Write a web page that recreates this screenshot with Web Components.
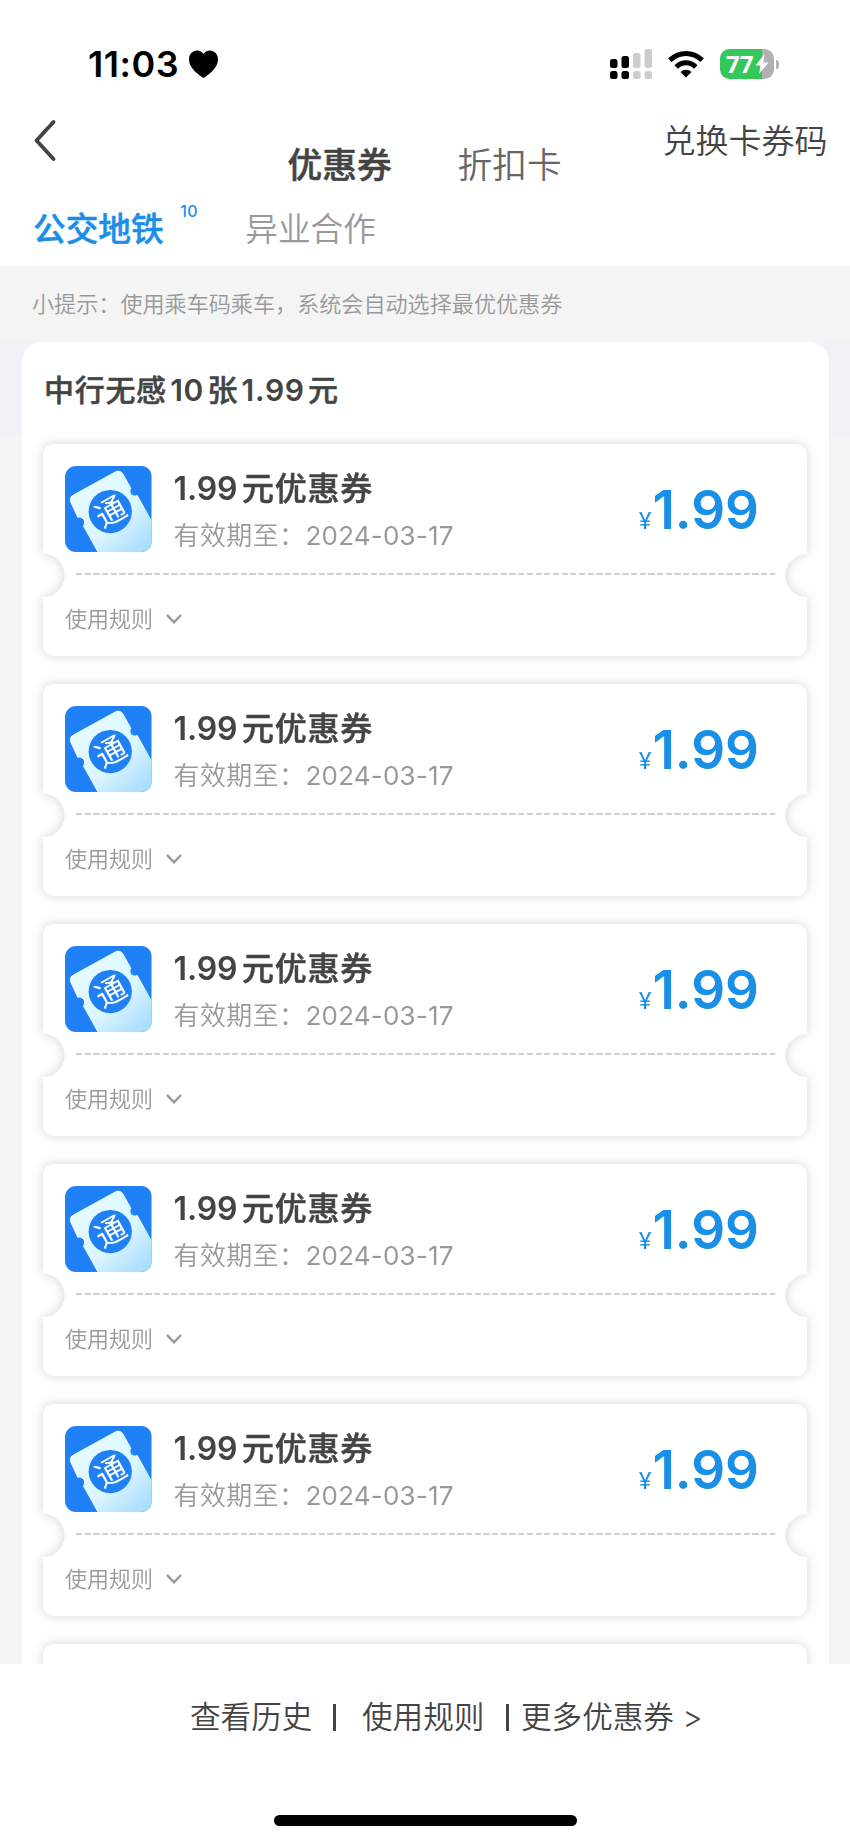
<!DOCTYPE html>
<html lang="zh-CN">
<head>
<meta charset="UTF-8">
<meta name="viewport" content="width=device-width, initial-scale=1">
<title>优惠券</title>
<style>
  body {
    margin: 0;
    background: #fff;
    color: #444;
    font-family: Inter, "Noto Sans CJK SC", sans-serif;
    font-weight: 350;
  }
</style>
</head>
<body>
<coupon-page></coupon-page>

<script>
class StatusBar extends HTMLElement {
  constructor() {
    super();
    this.attachShadow({ mode: 'open' }).innerHTML = `
      <style>
        :host {
          display: flex;
          align-items: center;
          height: 104px;
          padding: 24px 71px 0 88px;
          box-sizing: border-box;
          color: #000;
        }
        .time { font-size: 36px; font-weight: 600; line-height: 40px; letter-spacing: 0.5px; width: 101px; }
        .signal { margin-left: auto; }
        .wifi { margin-left: 16px; }
        .battery {
          display: flex;
          align-items: center;
          margin-left: 16px;
        }
        .level {
          display: flex;
          align-items: center;
          box-sizing: border-box;
          width: 54px;
          height: 30px;
          padding-left: 6px;
          border-radius: 9.5px;
          background: linear-gradient(90deg, #34c759 42px, #b1b1b1 42px);
          color: #fff;
          font: 700 24px/30px "Open Sans", sans-serif;
        }
        .cap { width: 3px; height: 9px; margin-left: 2px; border-radius: 0 5px 5px 0; background: #b1b1b1; }
        svg { display: block; flex: none; }
      </style>
      <div class="time">11:03</div>
      <svg width="29" height="28" viewBox="0 0 29 28"><path d="M14.5 28C11 25.5 0 19 0 9.5C0 4 3.6.4 8.2.4c2.7 0 5 1.3 6.3 3.600C15.800 1.700 18.100.4 20.800.4C25.400.4 29 4 29 9.500C29 19 18 25.500 14.500 28z"/></svg>
      <svg class="signal" width="42" height="30" viewBox="0 0 42 30">
        <g fill="#000"><rect y="10" width="7.5" height="9" rx="2.5"/><rect x="11.5" y="7" width="7.5" height="12" rx="2.5"/><rect y="22" width="7.5" height="8" rx="2.5"/><rect x="11.5" y="22" width="7.5" height="8" rx="2.5"/></g>
        <g fill="#ccc"><rect x="23" y="4" width="7.5" height="15" rx="2.5"/><rect x="34.5" y="0" width="7.5" height="19" rx="2.5"/><rect x="23" y="22" width="7.5" height="8" rx="2.5"/><rect x="34.5" y="22" width="7.5" height="8" rx="2.5"/></g>
      </svg>
      <svg class="wifi" width="36" height="30" viewBox="0 0 36 30">
        <g fill="none" stroke="#000" stroke-width="5"><path d="M1.8 11.2Q9 4.5 18 4.5T34.2 11.2"/><path d="M8.2 18Q12.5 13.8 18 13.8T27.8 18"/></g>
        <path d="M18 28.5l-5.500-5.500q2.300-2.200 5.500-2.200t5.500 2.200z"/>
      </svg>
      <div class="battery">
        <div class="level">77<svg width="14" height="20" viewBox="0 0 13 20" style="margin-left:2px"><path fill="#fff" d="M9 0L0 11.500h5L3.600 20L13 8.500H7.800z"/></svg></div>
        <div class="cap"></div>
      </div>
    `;
  }
}
customElements.define('status-bar', StatusBar);

class NavHeader extends HTMLElement {
  constructor() {
    super();
    this.attachShadow({ mode: 'open' }).innerHTML = `
      <style>
        :host {
          display: grid;
          grid-template-columns: 287.5px 170px 205px 1fr;
          height: 88px;
          white-space: nowrap;
          color: #444;
        }
        .back { margin: 15px 0 0 33px; }
        .tab { font-size: 34.7px; line-height: 50px; margin-top: 36px; color: #666; }
        .on { font-weight: 500; -webkit-text-stroke: 0.5px; color: #444; }
        .action { font-size: 33px; line-height: 50px; margin-top: 12px; }
      </style>
      <svg class="back" width="24" height="43" viewBox="0 0 24 43"><path d="M20.5 3L3.5 21.5L20.5 40" fill="none" stroke="#444" stroke-width="3.9" stroke-linecap="round" stroke-linejoin="round"/></svg>
      <div class="tab on">优惠券</div>
      <div class="tab">折扣卡</div>
      <div class="action">兑换卡券码</div>
    `;
  }
}
customElements.define('nav-header', NavHeader);

class CategoryTabs extends HTMLElement {
  constructor() {
    super();
    this.attachShadow({ mode: 'open' }).innerHTML = `
      <style>
        :host {
          display: flex;
          align-items: flex-start;
          height: 74px;
          padding-left: 33px;
          font-size: 32.7px;
          line-height: 50px;
          color: #999;
          white-space: nowrap;
        }
        .on { color: #1a8fe8; font-weight: 500; -webkit-text-stroke: 0.5px; margin-top: 12px; }
        .count { width: 65px; margin: 11px 0 0 16.5px; font-size: 16px; line-height: 16px; font-weight: 500; letter-spacing: 0.3px; color: #1a8fe8; }
        .off { margin-top: 12px; }
      </style>
      <div class="on">公交地铁</div>
      <div class="count">10</div>
      <div class="off">异业合作</div>
    `;
  }
}
customElements.define('category-tabs', CategoryTabs);

class CouponIcon extends HTMLElement {
  constructor() {
    super();
    this.attachShadow({ mode: 'open' }).innerHTML = `
      <style>
        :host { display: block; width: 86.5px; height: 86.5px; border-radius: 11px; overflow: hidden; }
        svg { display: block; width: 100%; height: 100%; }
      </style>
      <svg viewBox="0 0 86 86">
        <defs>
          <linearGradient id="paper" x1="0.2" y1="0.2" x2="0.9" y2="1">
            <stop offset="0" stop-color="#e4fbff"/>
            <stop offset="0.5" stop-color="#dcf7ff"/>
            <stop offset="1" stop-color="#a6dbff"/>
          </linearGradient>
        </defs>
        <rect width="86" height="86" fill="#2080f5"/>
        <path fill="url(#paper)" d="M8 28.500L50 5.500Q55 3 58 8L66 22Q64 25 66 28Q69 30.500 72 28.500L86 54V86H32.500L18 60Q20 56 18 53Q15.500 50.500 12.500 51.500L5.500 36.500Q3.500 31 8 28.500z"/>
        <circle cx="45" cy="45.3" r="21.5" fill="#2080f5"/>
        <text x="45.3" y="56.500" text-anchor="middle" transform="rotate(-29 45 45.3)" font-size="30" font-weight="400" fill="#fff">通</text>
      </svg>
    `;
  }
}
customElements.define('coupon-icon', CouponIcon);

class CouponCard extends HTMLElement {
  constructor() {
    super();
    this.attachShadow({ mode: 'open' }).innerHTML = `
      <style>
        :host {
          display: block;
          flex: none;
          height: 212px;
          filter: drop-shadow(0 0 6px rgba(50, 50, 70, 0.2));
          white-space: nowrap;
        }
        /* each half has its own notch cut out of the background */
        .ticket {
          display: flex;
          flex-direction: column;
          height: 100%;
          box-sizing: border-box;
          padding: 22px 32px 0 22px;
          border-radius: 11px;
          background:
            radial-gradient(circle at 0 131.5px, transparent 21.2px, #fff 22px) left / 50% 100% no-repeat,
            radial-gradient(circle at 100% 131.5px, transparent 21.2px, #fff 22px) right / 50% 100% no-repeat;
        }
        .main { display: flex; height: 86px; }
        .info { margin-left: 22px; }
        .name { font-size: 32px; line-height: 46px; font-weight: 500; -webkit-text-stroke: 0.5px; letter-spacing: 0.8px; color: #444; }
        .date { font-size: 26px; line-height: 40px; margin-top: 4px; letter-spacing: 0.4px; color: #999; }
        .day { font-weight: 400; letter-spacing: 0.2px; }
        .price { display: flex; align-items: baseline; gap: 1px; margin: 12px 16px 0 auto; color: #1a8fe8; line-height: 64px; }
        .yen { font-size: 23px; font-weight: 400; }
        .sum { font-size: 53px; font-weight: 600; }
        .line {
          height: 2px;
          margin: 21px 0 0 11px;
          background: repeating-linear-gradient(90deg, #d0d0d0 0 6.3px, transparent 6.3px 8.67px);
        }
        .rules { display: flex; align-items: center; gap: 12.5px; margin-top: 28px; font-size: 22px; line-height: 32px; color: #999; }
      </style>
      <div class="ticket">
        <div class="main">
          <coupon-icon></coupon-icon>
          <div class="info">
            <div class="name"><slot></slot></div>
            <div class="date">有效期至：<span class="day"><slot name="date"></slot></span></div>
          </div>
          <div class="price"><span class="yen">¥</span><span class="sum"><slot name="price"></slot></span></div>
        </div>
        <div class="line"></div>
        <div class="rules">使用规则
          <svg width="16" height="10" viewBox="0 0 16 10"><path d="M1 1L8 8.3L15 1" fill="none" stroke="#999" stroke-width="2.4"/></svg>
        </div>
      </div>
    `;
  }
}
customElements.define('coupon-card', CouponCard);

class CouponGroup extends HTMLElement {
  constructor() {
    super();
    this.attachShadow({ mode: 'open' }).innerHTML = `
      <style>
        :host {
          display: block;
          box-sizing: border-box;
          height: 1322px;
          padding: 0 21.5px;
          overflow: hidden;
          background: linear-gradient(#f2f1f8 95px, #f4f4f4 95px);
        }
        .panel {
          box-sizing: border-box;
          height: 1340px;
          padding: 23px 21.5px 0;
          border-radius: 20px 20px 0 0;
          background: #fff;
        }
        .title { font-size: 30px; line-height: 50px; font-weight: 500; -webkit-text-stroke: 0.5px; letter-spacing: 0.7px; padding-left: 1px; }
        .list { display: flex; flex-direction: column; gap: 28px; margin-top: 28.5px; }
        .next { height: 40px; border-radius: 11px; background: #fff; box-shadow: 0 0 12px rgba(50, 50, 70, 0.2); }
      </style>
      <div class="panel">
        <div class="title"><slot name="title"></slot></div>
        <div class="list"><slot></slot><div class="next"></div></div>
      </div>
    `;
  }
}
customElements.define('coupon-group', CouponGroup);

class PageFooter extends HTMLElement {
  constructor() {
    super();
    this.attachShadow({ mode: 'open' }).innerHTML = `
      <style>
        :host { display: flex; flex-direction: column; align-items: center; height: 179px; background: #fff; }
        .links {
          display: flex;
          align-items: center;
          align-self: flex-start;
          margin: 31px 0 0 190px;
          font-size: 30.6px;
          line-height: 44px;
          white-space: nowrap;
        }
        .bar { width: 3px; height: 27px; background: #444; }
        .first { width: 143px; }
        .second { width: 144px; margin-left: 26px; }
        .third { margin-left: 12px; }
        .home { width: 303px; height: 11px; margin-top: 76px; border-radius: 6px; background: #000; }
      </style>
      <div class="links">
        <span class="first">查看历史</span>
        <i class="bar"></i>
        <span class="second">使用规则</span>
        <i class="bar"></i>
        <span class="third">更多优惠券 &gt;</span>
      </div>
      <div class="home"></div>
    `;
  }
}
customElements.define('page-footer', PageFooter);

class CouponPage extends HTMLElement {
  constructor() {
    super();
    const cards = Array.from({ length: 5 }, () => `
      <coupon-card><span class="amount">1.99</span>元优惠券<span slot="date">2024-03-17</span><span slot="price">1.99</span></coupon-card>
    `).join('');
    this.attachShadow({ mode: 'open' }).innerHTML = `
      <style>
        :host { display: block; width: 850px; height: 1843px; overflow: hidden; }
        .tip {
          height: 76px;
          padding-left: 32px;
          background: #f4f4f4;
          color: #999;
          font-size: 22.1px;
          line-height: 76px;
        }
        .amount, .num { font-weight: 600; -webkit-text-stroke: 0; }
        .amount { letter-spacing: -0.1px; margin-right: 4.5px; }
        .num { margin: 0 3.4px; }
      </style>
      <status-bar></status-bar>
      <nav-header></nav-header>
      <category-tabs></category-tabs>
      <div class="tip">小提示：使用乘车码乘车，系统会自动选择最优优惠券</div>
      <coupon-group>
        <span slot="title">中行无感<span class="num">10</span>张<span class="num">1.99</span>元</span>
        ${cards}
      </coupon-group>
      <page-footer></page-footer>
    `;
  }
}
customElements.define('coupon-page', CouponPage);
</script>
</body>
</html>
